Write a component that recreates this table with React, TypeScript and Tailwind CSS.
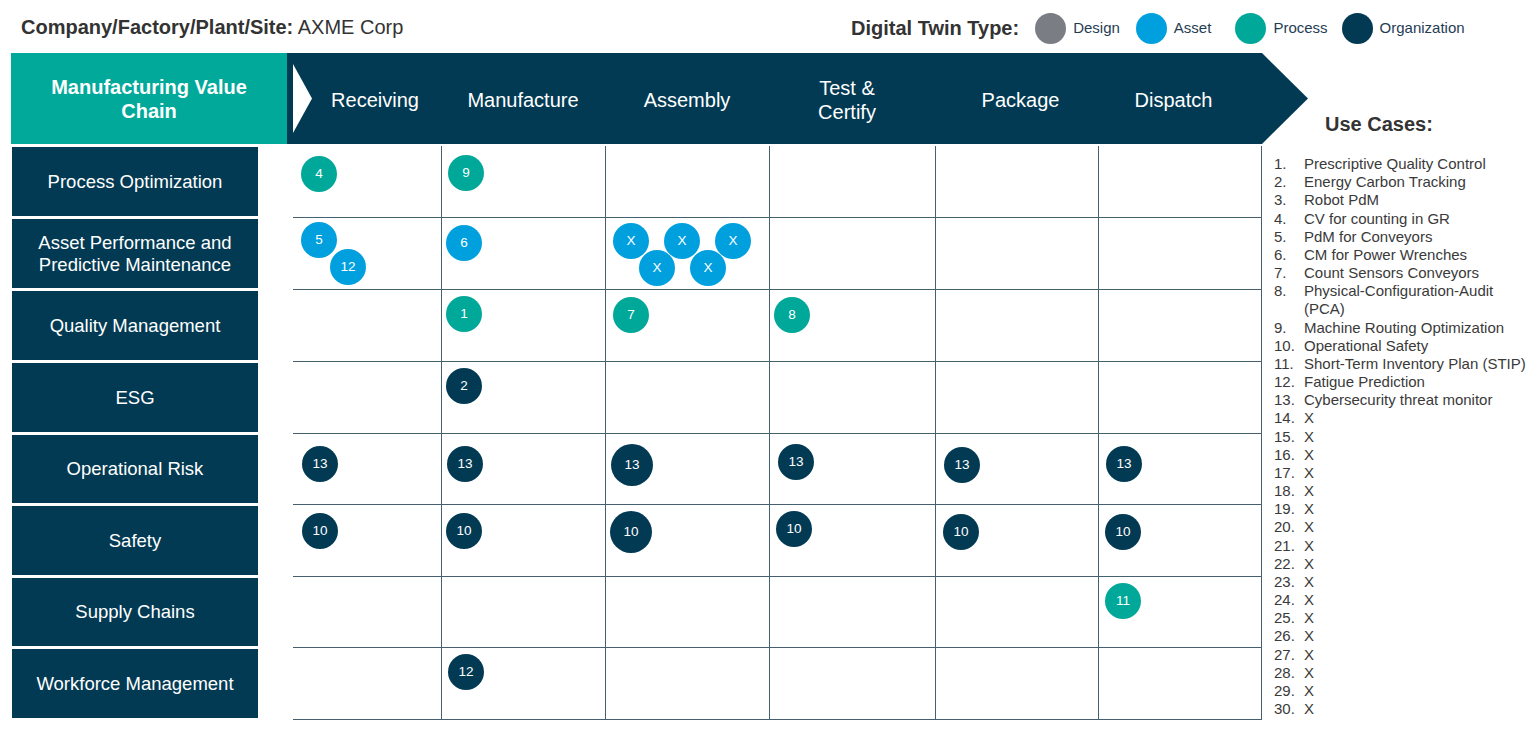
import React from 'react'

type Kind = 'design' | 'asset' | 'process' | 'org'

const KIND_BG: Record<Kind, string> = {
  design: 'bg-[#7b7d85]',
  asset: 'bg-[#00a0df]',
  process: 'bg-[#00a899]',
  org: 'bg-[#023a54]',
}

const STAGES = [
  { label: ['Receiving'], pad: 'pl-[16px]' },
  { label: ['Manufacture'], pad: '' },
  { label: ['Assembly'], pad: '' },
  { label: ['Test &', 'Certify'], pad: 'pr-[10px]' },
  { label: ['Package'], pad: 'pl-[8px]' },
  { label: ['Dispatch'], pad: 'pr-[12px]' },
]

const AREAS = [
  ['Process Optimization'],
  ['Asset Performance and', 'Predictive Maintenance'],
  ['Quality Management'],
  ['ESG'],
  ['Operational Risk'],
  ['Safety'],
  ['Supply Chains'],
  ['Workforce Management'],
]

const USE_CASES = [
  'Prescriptive Quality Control',
  'Energy Carbon Tracking',
  'Robot PdM',
  'CV for counting in GR',
  'PdM for Conveyors',
  'CM for Power Wrenches',
  'Count Sensors Conveyors',
  'Physical-Configuration-Audit (PCA)',
  'Machine Routing Optimization',
  'Operational Safety',
  'Short-Term Inventory Plan (STIP)',
  'Fatigue Prediction',
  'Cybersecurity threat monitor',
  ...Array.from({ length: 17 }, () => 'X'),
]

function Dot({ label, kind, big = false }: { label: string; kind: Kind; big?: boolean }) {
  return (
    <div
      className={`flex shrink-0 items-center justify-center rounded-full text-[13.5px] text-white ${KIND_BG[kind]} ${
        big ? 'h-[42px] w-[42px]' : 'h-[36px] w-[36px]'
      }`}
    >
      {label}
    </div>
  )
}

// cell contents keyed by "row-col"
const CELLS: Record<string, { pad: string; node: React.ReactNode }> = {
  '0-0': { pad: 'pl-[8px] pt-[10px]', node: <Dot label="4" kind="process" /> },
  '0-1': { pad: 'pl-[6px] pt-[9px]', node: <Dot label="9" kind="process" /> },
  '1-0': {
    pad: 'pl-[8px] pt-[4px]',
    node: (
      <div className="flex flex-col">
        <Dot label="5" kind="asset" />
        <div className="-mt-[9px] ml-[29px]">
          <Dot label="12" kind="asset" />
        </div>
      </div>
    ),
  },
  '1-1': { pad: 'pl-[4px] pt-[7px]', node: <Dot label="6" kind="asset" /> },
  '1-2': {
    pad: 'pl-[7px] pt-[5px]',
    node: (
      <div className="flex flex-col">
        <div className="flex gap-[15px]">
          <Dot label="X" kind="asset" />
          <Dot label="X" kind="asset" />
          <Dot label="X" kind="asset" />
        </div>
        <div className="-mt-[9px] ml-[26px] flex gap-[15px]">
          <Dot label="X" kind="asset" />
          <Dot label="X" kind="asset" />
        </div>
      </div>
    ),
  },
  '2-1': { pad: 'pl-[4px] pt-[6px]', node: <Dot label="1" kind="process" /> },
  '2-2': { pad: 'pl-[7px] pt-[7px]', node: <Dot label="7" kind="process" /> },
  '2-3': { pad: 'pl-[4px] pt-[7px]', node: <Dot label="8" kind="process" /> },
  '3-1': { pad: 'pl-[4px] pt-[6px]', node: <Dot label="2" kind="org" /> },
  '4-0': { pad: 'pl-[9px] pt-[12px]', node: <Dot label="13" kind="org" /> },
  '4-1': { pad: 'pl-[5px] pt-[12px]', node: <Dot label="13" kind="org" /> },
  '4-2': { pad: 'pl-[5px] pt-[10px]', node: <Dot label="13" kind="org" big /> },
  '4-3': { pad: 'pl-[8px] pt-[10px]', node: <Dot label="13" kind="org" /> },
  '4-4': { pad: 'pl-[8px] pt-[13px]', node: <Dot label="13" kind="org" /> },
  '4-5': { pad: 'pl-[7px] pt-[12px]', node: <Dot label="13" kind="org" /> },
  '5-0': { pad: 'pl-[9px] pt-[8px]', node: <Dot label="10" kind="org" /> },
  '5-1': { pad: 'pl-[4px] pt-[8px]', node: <Dot label="10" kind="org" /> },
  '5-2': { pad: 'pl-[4px] pt-[6px]', node: <Dot label="10" kind="org" big /> },
  '5-3': { pad: 'pl-[6px] pt-[6px]', node: <Dot label="10" kind="org" /> },
  '5-4': { pad: 'pl-[7px] pt-[9px]', node: <Dot label="10" kind="org" /> },
  '5-5': { pad: 'pl-[6px] pt-[9px]', node: <Dot label="10" kind="org" /> },
  '6-5': { pad: 'pl-[6px] pt-[6px]', node: <Dot label="11" kind="process" /> },
  '7-1': { pad: 'pl-[6px] pt-[6px]', node: <Dot label="12" kind="org" /> },
}

const GRID_COLS = 'grid-cols-[148px_164px_164px_166px_163px_163px]'
const GRID_ROWS = 'grid-rows-[72px_72px_72px_72px_71px_72px_71px_72px]'

function LegendItem({ kind, label, gap }: { kind: Kind; label: string; gap: string }) {
  return (
    <div className={`flex items-center gap-[7px] ${gap}`}>
      <span className={`block h-[31px] w-[31px] rounded-full ${KIND_BG[kind]}`} />
      <span className="text-[15px] text-[#1f3d55]">{label}</span>
    </div>
  )
}

export default function App() {
  return (
    <div className="min-h-[731px] w-[1536px] bg-white font-['Liberation_Sans',Arial,sans-serif] text-[#333]">
      {/* title + legend */}
      <div className="flex h-[53px] items-center">
        <div className="w-[851px] pl-[21px] text-[20px] text-[#333]">
          <span className="font-bold">Company/Factory/Plant/Site:</span> AXME&nbsp;Corp
        </div>
        <div className="mt-[3px] flex items-center">
          <span className="text-[20px] font-bold text-[#333]">Digital Twin Type:</span>
          <LegendItem kind="design" label="Design" gap="ml-[16px]" />
          <LegendItem kind="asset" label="Asset" gap="ml-[16px]" />
          <LegendItem kind="process" label="Process" gap="ml-[24px]" />
          <LegendItem kind="org" label="Organization" gap="ml-[14px]" />
        </div>
      </div>

      {/* value chain header */}
      <div className="flex h-[91px]">
        <div className="ml-[11px] flex w-[276px] items-center justify-center bg-[#00a99a] text-center text-[20px] font-bold leading-[24px] text-white">
          Manufacturing Value
          <br />
          Chain
        </div>
        <div className="relative w-[1021px] bg-[#023a53] pl-[6px] [clip-path:polygon(0_0,calc(100%-46px)_0,100%_50%,calc(100%-46px)_100%,0_100%)]">
          <svg className="absolute left-[6px] top-[11px]" width="19" height="69" viewBox="0 0 19 69">
            <polygon points="0,0 19,34.5 0,69" fill="#ffffff" />
          </svg>
          <div className={`grid h-full ${GRID_COLS}`}>
            {STAGES.map((s) => (
              <div
                key={s.label[0]}
                className={`flex items-center justify-center pt-[3px] text-center text-[20px] leading-[24px] text-white ${s.pad}`}
              >
                <div>
                  {s.label.map((l) => (
                    <div key={l}>{l}</div>
                  ))}
                </div>
              </div>
            ))}
          </div>
        </div>
        <div className="flex flex-1 items-end pb-[5px] pl-[17px]">
          <span className="text-[20px] font-bold text-[#333]">Use Cases:</span>
        </div>
      </div>

      {/* matrix */}
      <div className="flex items-start">
        <div className={`ml-[12px] mt-[1px] grid w-[246px] ${GRID_ROWS}`}>
          {AREAS.map((a) => (
            <div
              key={a[0]}
              className="mb-[1px] mt-[2px] flex flex-col items-center justify-center bg-[#023a53] text-center text-[18.5px] leading-[22px] text-white"
            >
              {a.map((l) => (
                <div key={l}>{l}</div>
              ))}
            </div>
          ))}
        </div>

        <div className={`ml-[35px] mt-[2px] grid border-r border-[#45616f] ${GRID_COLS} ${GRID_ROWS}`}>
          {AREAS.map((_, r) =>
            STAGES.map((__, c) => {
              const cell = CELLS[`${r}-${c}`]
              return (
                <div
                  key={`${r}-${c}`}
                  className={`flex items-start border-b border-[#45616f] ${c > 0 ? 'border-l' : ''} ${
                    cell ? cell.pad : ''
                  }`}
                >
                  {cell?.node}
                </div>
              )
            })
          )}
        </div>

        <ol className="pl-[12px] pt-[11px] text-[15px] leading-[18.17px] text-[#3a3a3a]">
          {USE_CASES.map((u, i) => (
            <li key={i} className="flex">
              <span className="w-[30px] shrink-0">{i + 1}.</span>
              <span className={u.length > 32 ? 'w-[210px]' : ''}>{u}</span>
            </li>
          ))}
        </ol>
      </div>
    </div>
  )
}
